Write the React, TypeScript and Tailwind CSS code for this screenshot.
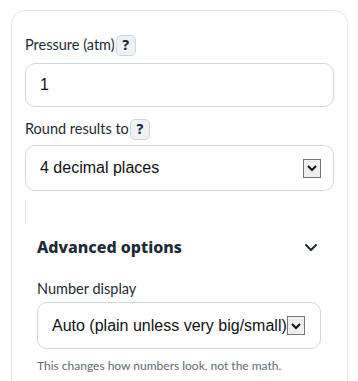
import React from "react";

function HelpBadge() {
  return (
    <span className="inline-flex items-center justify-center w-[20px] h-[21px] rounded-[5px] border border-[#cdd6dc] bg-[#eef2f5] text-[#1b2a35] text-[14px] font-extrabold leading-none ml-[1px] font-['Noto_Sans',sans-serif]">
      ?
    </span>
  );
}

function SelectArrow() {
  return (
    <span className="flex items-center justify-center w-[18px] h-[19px] border border-[#767676] bg-[#efefef] flex-shrink-0">
      <svg width="12" height="8" viewBox="0 0 12 8" fill="none">
        <path d="M2 2l4 4 4-4" stroke="#111" strokeWidth={2} />
      </svg>
    </span>
  );
}

export default function App() {
  return (
    <div className="w-[358px] h-[381px] overflow-hidden bg-white font-['Lato',sans-serif]">
      <div className="ml-[11px] mt-[10px] w-[337px] h-[400px] rounded-[14px] border border-[#e3e6e8] shadow-[0_1px_3px_rgba(0,0,0,0.04)] px-[13px] pt-[23px]">
        {/* Pressure */}
        <div className="flex items-center h-[22px] text-[14.5px] text-[#1b2a35]">
          <span>Pressure (atm)</span>
          <HelpBadge />
        </div>
        <div className="mt-[7px] h-[44px] rounded-[10px] border border-[#cfd8dc] flex items-center px-[14px] font-['Liberation_Sans',sans-serif] text-[16px] text-[#111]">
          1
        </div>

        {/* Rounding */}
        <div className="mt-[11px] flex items-center h-[22px] text-[14.5px] text-[#1b2a35]">
          <span>Round results to</span>
          <HelpBadge />
        </div>
        <div className="mt-[5px] h-[46px] rounded-[10px] border border-[#cfd8dc] flex items-center justify-between pl-[14px] pr-[12px] font-['Liberation_Sans',sans-serif] text-[16px] text-[#111]">
          <span>4 decimal places</span>
          <SelectArrow />
        </div>

        <div className="mt-[9px] h-[24px] border-l border-[#dde3e6]" />

        {/* Advanced options */}
        <div className="pl-[12px] pr-[10px]">
          <div className="mt-[11px] flex items-center justify-between h-[24px]">
            <span className="text-[16px] font-extrabold text-[#1b2a35] font-['Noto_Sans',sans-serif]">Advanced options</span>
            <svg width="14" height="9" viewBox="0 0 14 9" fill="none" className="mr-[6px]">
              <path d="M2 2l5 5 5-5" stroke="#1b2a35" strokeWidth={2} strokeLinecap="round" strokeLinejoin="round" />
            </svg>
          </div>
          <div className="mt-[20px] h-[20px] flex items-center text-[14.5px] text-[#1b2a35]">Number display</div>
          <div className="mt-[3px] h-[47px] w-[284px] rounded-[10px] border border-[#cfd8dc] flex items-center pl-[14px] font-['Liberation_Sans',sans-serif] text-[16px] text-[#111] whitespace-nowrap">
            <span>Auto (plain unless very big/small)</span>
            <SelectArrow />
          </div>
          <div className="mt-[8px] text-[12px] text-[#5b6b78]">This changes how numbers look, not the math.</div>
        </div>
      </div>
    </div>
  );
}
